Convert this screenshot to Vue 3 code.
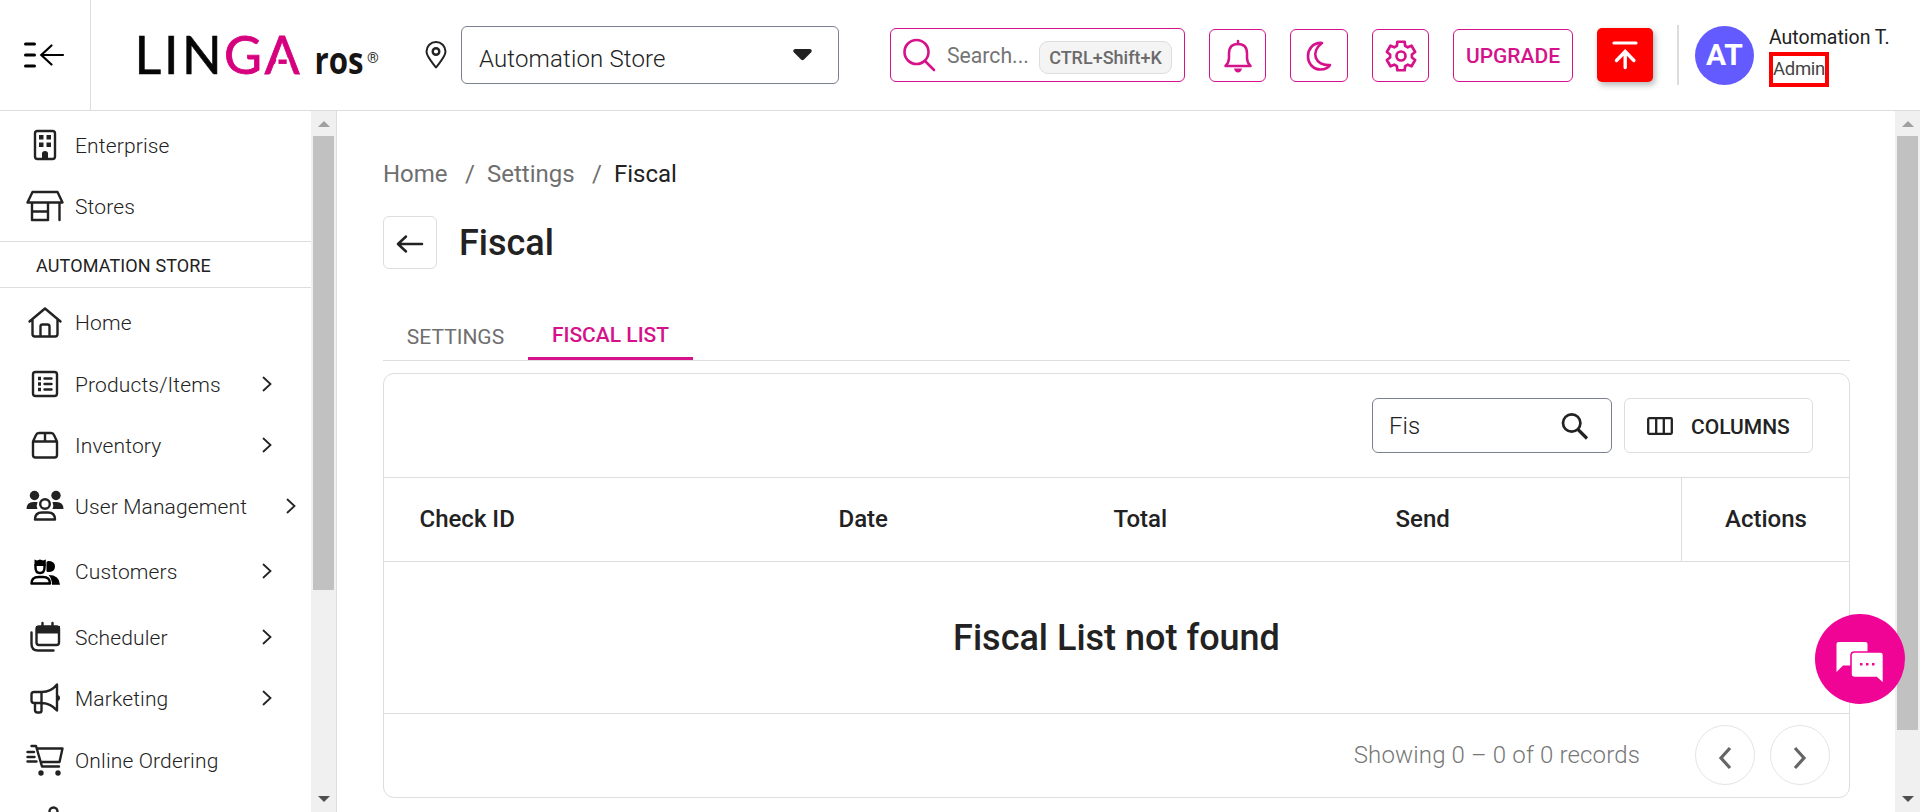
<script setup>
const topItems = [
  { label: 'Enterprise', icon: 'enterprise', h: 61 },
  { label: 'Stores', icon: 'stores', h: 61 },
]
const storeItems = [
  { label: 'Home', icon: 'home', h: 62 },
  { label: 'Products/Items', icon: 'products', h: 61, arrow: true },
  { label: 'Inventory', icon: 'inventory', h: 61, arrow: true },
  { label: 'User Management', icon: 'users', h: 61, arrow: true, wide: true },
  { label: 'Customers', icon: 'customers', h: 70, arrow: true },
  { label: 'Scheduler', icon: 'scheduler', h: 61, arrow: true },
  { label: 'Marketing', icon: 'marketing', h: 61, arrow: true },
  { label: 'Online Ordering', icon: 'ordering', h: 63 },
  { label: '', icon: 'more', h: 61 },
]
const icons = {
  enterprise: '<rect x="12" y="8" width="20" height="28" rx="2.5"/><path class="f" d="M16 12h4.500v4.500H16zM23.500 12H28v4.500h-4.500zM16 19.500h4.500V24H16zM23.500 19.500H28V24h-4.500zM19 36v-5.500q0-2.500 3-2.500t3 2.500V36z"/>',
  stores: '<path d="M9.500 8h25l5 10.500h-35zM9 18.500V36h16V18.500M9 27.500h16M36.500 18.500V36"/>',
  home: '<path d="M6.500 21.500 22 8.500l15.500 13M9.500 19.500V34q0 2.500 2.500 2.500h20q2.500 0 2.500-2.500V19.500M17.500 36V26.500q0-2 2-2h5q2 0 2 2V36"/>',
  products: '<rect x="10" y="10" width="24" height="24" rx="2.500"/><path d="M21.500 16.500h7M21.500 22h7M21.500 27.500h7"/><path class="f" d="M15 14.800h3v3.400h-3zM15 20.300h3v3.400h-3zM15 25.800h3v3.400h-3z"/>',
  inventory: '<path d="M10 18.500h24V32q0 2.500-2.500 2.500h-19Q10 34.500 10 32zM10 18.500l3-6.500q.8-2 3-2h12q2.200 0 3 2l3 6.500M22 10v8.500"/>',
  users: '<g class="f"><circle cx="11.500" cy="11.500" r="4.700"/><circle cx="33" cy="11.500" r="4.700"/><path d="M3.500 25q0-7 7-7h4q-1.500 3.500 0 7zM40.500 25q0-7-7-7h-4q1.500 3.500 0 7z"/></g><circle cx="22" cy="20" r="4.800"/><path d="M12 35.500q0-7 7-7h6q7 0 7 7z"/>',
  customers: '<g class="k"><path d="M8.500 34.500q0-6.500 7-6.500h4.500q7 0 7 6.500zM12.500 16v2.500q0 5.500 4.500 5.500t4.500-5.500V16"/><path class="f" d="M11.500 10.500 14 11.500l3-1 3 1 2.800-1V17H11.500zM25 12q7 0 7 5.500T25 23q-1.500 0-1.500-1V13zM25.500 26q11 0 11.500 9.700h-8q0-6-3.500-9.700z"/></g>',
  scheduler: '<rect x="13.500" y="11.500" width="22.500" height="18.500" rx="2.500"/><path d="M19.500 8v3M29.500 8v3M8.500 17.500V29q0 6.500 6.500 6.500h15.500"/><path class="f" d="M13 11h24v7.500H13z"/>',
  marketing: '<path d="M11 16h8q9 0 15-7.500v26Q28 27.500 19 27h-8q-2.500 0-2.500-2.500v-6Q8.500 16 11 16zM18.500 16v11M12 27.500V34q0 2.500 2.500 2.500h2q2 0 2-2V27.500"/><path class="f" d="M34 19q3 0 3 3t-3 3z"/>',
  ordering: '<path d="M8.500 8h4.500l6 20.500h17M14 10.500h25.500l-3 13.500H18M4.500 14h6.500M4.500 19h7M4.500 23.500h9"/><circle class="f" cx="18" cy="35" r="2.700"/><circle class="f" cx="35" cy="35" r="2.700"/>',
  more: '<circle cx="30.500" cy="11.500" r="4"/><path d="M22 21.500l6-7"/>',
}
const gearPath = (() => {
  let d = ''
  for (let i = 0; i < 12; i++) {
    const c = ((i * 30 - 90) * Math.PI) / 180
    const r = i % 2 ? 11 : 14.7
    const w = i % 2 ? 0.14 : 0.25
    const p = (a) => `${(16 + r * Math.cos(a)).toFixed(2)} ${(16 + r * Math.sin(a)).toFixed(2)}`
    d += `${i ? 'L' : 'M'}${p(c - w)}L${p(c + w)}`
  }
  return d + 'Z'
})()
const columns = ['Check ID', 'Date', 'Total', 'Send', 'Actions']
</script>

<template>
  <div class="page">
    <header class="header">
      <div class="toggle">
        <svg width="42" height="28" viewBox="0 0 42 28" fill="none" stroke="#000" stroke-linecap="round">
          <path d="M1.500 3h9M1.500 14h9M1.500 25h9" stroke-width="3" />
          <path d="M39 14H18M27.500 4.500 17.300 14 27.500 23.500" stroke-width="2.200" />
        </svg>
      </div>
      <svg class="logo" width="250" height="80" viewBox="0 0 250 80">
        <g font-family="Lato, sans-serif" font-size="52">
          <text x="4.500 34 52" y="58.500" fill="#060606" stroke="#060606" stroke-width=".6">LIN</text>
          <text x="94 134.500" y="58.500" fill="#d6007f" stroke="#d6007f" stroke-width=".8">GA</text>
        </g>
        <path d="M146.800 43.500h1.700v6h-3.800zM158.400 43.500h-1.700v6h3.800z" fill="#fff" />
        <text x="184.500" y="58.500" font-family="'Open Sans', sans-serif" font-weight="700" font-size="38" textLength="49" lengthAdjust="spacingAndGlyphs" fill="#171414">ros</text>
        <text x="237" y="47.500" font-family="Roboto, sans-serif" font-size="15" fill="#333">®</text>
      </svg>
      <svg class="pin" width="22" height="28" viewBox="0 0 22 28" fill="none" stroke="#222" stroke-width="2">
        <path d="M11 26.500C7 21 1.500 15.500 1.500 10.500a9.500 9.500 0 0 1 19 0C20.500 15.500 15 21 11 26.500z" stroke-linejoin="round" />
        <circle cx="11" cy="10.500" r="3.300" stroke-width="2.400" />
      </svg>
      <div class="select">
        <span>Automation Store</span>
        <svg width="19" height="12" viewBox="0 0 19 12"><path d="M2 0h15q3 1 1 3.500L11 10.500q-1.500 1.500-3 0L1 3.500Q-1 1 2 0z" fill="#222" /></svg>
      </div>
      <div class="search">
        <svg width="34" height="34" viewBox="0 0 34 34" fill="none" stroke="#d5128a" stroke-width="2.600" stroke-linecap="round"><circle cx="14.500" cy="14" r="12" /><path d="m23 23 9 9" /></svg>
        <span class="ph">Search...</span>
        <span class="kbd">CTRL+Shift+K</span>
      </div>
      <div class="sq bell">
        <svg width="32" height="34" viewBox="0 0 32 34" fill="none" stroke="#d5128a" stroke-width="2.500" stroke-linejoin="round"><path d="M3.500 27q3.500-3.500 3.500-8v-4.500Q7 5 16 5t9 9.500V19q0 4.500 3.500 8z" /><path d="M16 5V2" stroke-linecap="round" /><path d="M12 29.500h8q-1 4-4 4t-4-4z" fill="#d5128a" stroke="none" /></svg>
      </div>
      <div class="sq moon">
        <svg width="28" height="30" viewBox="0 0 28 30" fill="none" stroke="#d5128a" stroke-width="2.700" stroke-linejoin="round"><path d="M17 2C7 1.500 3 9 3 15c0 8 5.500 13.500 12.500 13.500 4 0 7.500-1.500 9.500-4.500C10 25 5 11 17 2z" /></svg>
      </div>
      <div class="sq gear">
        <svg width="32" height="32" viewBox="0 0 32 32" fill="none" stroke="#d5128a" stroke-width="2.700" stroke-linejoin="round"><path :d="gearPath" /><circle cx="16" cy="16" r="4.500" /></svg>
      </div>
      <div class="upgrade">UPGRADE</div>
      <div class="upload">
        <svg width="28" height="32" viewBox="0 0 28 32" fill="none" stroke="#fff" stroke-width="3.200" stroke-linecap="round"><path d="M3 4h22" /><path d="M14.200 28.500V12.500M5.500 21.500l8.700-9 8.700 9" stroke-width="3.400" /></svg>
      </div>
      <div class="vline"></div>
      <div class="avatar">AT</div>
      <div class="user">
        <span class="name">Automation T.</span>
        <span class="role">Admin</span>
      </div>
    </header>

    <div class="body">
      <aside class="sidebar">
        <nav class="nav">
          <div class="group top">
            <div v-for="it in topItems" :key="it.label" class="item" :style="{ height: it.h + 'px' }">
              <svg class="ico" width="44" height="44" viewBox="0 0 44 44" v-html="icons[it.icon]"></svg>
              <span>{{ it.label }}</span>
            </div>
          </div>
          <div class="store">AUTOMATION STORE</div>
          <div class="group">
            <div v-for="it in storeItems" :key="it.icon" class="item" :class="{ wide: it.wide }" :style="{ height: it.h + 'px' }">
              <svg class="ico" width="44" height="44" viewBox="0 0 44 44" v-html="icons[it.icon]"></svg>
              <span>{{ it.label }}</span>
              <svg v-if="it.arrow" class="chev" width="10" height="16" viewBox="0 0 10 16"><path d="m1.500 1.500 7 6.500-7 6.500" /></svg>
            </div>
          </div>
        </nav>
        <div class="bar">
          <i class="up"></i>
          <div class="thumb side"></div>
          <i class="down"></i>
        </div>
      </aside>

      <main class="main">
        <div class="crumbs">
          <span class="c1">Home</span><span class="sl">/</span><span class="c2">Settings</span><span class="sl">/</span><span class="cur">Fiscal</span>
        </div>
        <div class="titlebar">
          <div class="back">
            <svg width="28" height="20" viewBox="0 0 28 20" fill="none" stroke="#222" stroke-width="2.500" stroke-linecap="round" stroke-linejoin="round"><path d="M26 10H2M10 2.500 2 10l8 7.500" /></svg>
          </div>
          <h1>Fiscal</h1>
        </div>
        <div class="tabs">
          <div class="tab">SETTINGS</div>
          <div class="tab on">FISCAL LIST</div>
        </div>
        <section class="card">
          <div class="tools">
            <div class="filter">
              <span>Fis</span>
              <svg width="28" height="28" viewBox="0 0 28 28" fill="none" stroke="#222" stroke-width="2.700"><circle cx="10.700" cy="11" r="8.700" /><path d="m17 17.500 9 9" stroke-width="3.200" /></svg>
            </div>
            <div class="cols">
              <svg width="26" height="18" viewBox="0 0 26 18" fill="none" stroke="#222" stroke-width="2.300"><rect x="1.200" y="1.200" width="23.600" height="15.600" rx="1" /><path d="M9.200 1v16M16.800 1v16" /></svg>
              <span>COLUMNS</span>
            </div>
          </div>
          <div class="thead">
            <div v-for="c in columns" :key="c">{{ c }}</div>
          </div>
          <div class="empty">Fiscal List not found</div>
          <div class="foot">
            <span>Showing 0 – 0 of 0 records</span>
            <div class="pg"><svg width="14" height="24" viewBox="0 0 14 24"><path d="M12 2 3 12l9 10" /></svg></div>
            <div class="pg"><svg width="14" height="24" viewBox="0 0 14 24"><path d="m2 2 9 10-9 10" /></svg></div>
          </div>
        </section>
      </main>
      <div class="bar">
        <i class="up"></i>
        <div class="thumb page-thumb"></div>
        <i class="down"></i>
      </div>
    </div>

    <div class="chat">
      <svg width="48" height="44" viewBox="0 0 48 44">
        <path d="M2.500 1h27q2 0 2 2v19.500q0 2-2 2H7L.5 31V3q0-2 2-2z" fill="#fff" />
        <path d="M18.500 11h26q3 0 3 3v29l-7-6.500h-22q-3.500 0-3.500-3.500V14.500q0-3.500 3.500-3.500z" fill="#fff" stroke="#f00495" stroke-width="1.600" />
        <path d="M24 22h2.500v2.500H24zM30 22h2.500v2.500H30zM36 22h2.500v2.500H36z" fill="#f00495" />
      </svg>
    </div>
  </div>
</template>

<style>
html, body { margin: 0; overflow: hidden; background: #fff; }
</style>

<style scoped>
.page { width: 1920px; height: 812px; overflow: hidden; display: flex; flex-direction: column; position: relative; font-family: Roboto, "Liberation Sans", sans-serif; color: #222; background: #fff; }
.page * { box-sizing: border-box; }
svg { display: block; flex: none; }
.header { height: 111px; flex: none; display: flex; align-items: center; border-bottom: 1px solid #ddd; white-space: nowrap; }
.toggle { width: 91px; height: 110px; border-right: 1px solid #ddd; display: flex; align-items: center; padding: 0 0 1px 24px; flex: none; }
.logo { margin: 0 45px 1px 39px; }
.pin { margin-right: 14px; }
.select { width: 378px; height: 58px; border: 1px solid #7b8190; border-radius: 6px; display: flex; align-items: center; justify-content: space-between; padding: 0 26px 0 17px; font-size: 24px; font-weight: 300; flex: none; letter-spacing: .15px; }
.select span { padding-top: 8px; }
.search { width: 295px; height: 54px; border: 1px solid #d5128a; border-radius: 6px; margin-left: 51px; display: flex; align-items: center; padding-left: 11px; flex: none; }
.ph { font-size: 21.200px; color: #757575; margin-left: 11px; width: 92px; padding-top: 1px; }
.kbd { width: 133px; height: 33px; margin-top: 5px; border: 1px solid #ddd; border-radius: 9px; background: #f4f4f4; color: #6b6b6b; font-size: 18px; font-weight: 500; line-height: 32px; text-align: center; }
.sq { width: 57px; height: 53px; border: 1px solid #d5128a; border-radius: 6px; display: flex; align-items: center; justify-content: center; margin: 1px 0 0 24px; flex: none; }
.moon { width: 58px; }
.upgrade { width: 120px; height: 53px; border: 1px solid #d5128a; border-radius: 6px; margin: 1px 0 0 24px; color: #d5128a; font-size: 21px; font-weight: 500; line-height: 52px; text-align: center; flex: none; }
.upload { width: 56px; height: 54px; background: #f00; border-radius: 5px; margin-left: 24px; display: flex; align-items: center; justify-content: center; box-shadow: 2px 3px 6px rgba(0,0,0,.3); flex: none; }
.vline { width: 2px; height: 60px; background: #ddd; margin: 0 16px 0 24px; flex: none; }
.avatar { width: 59px; height: 59px; border-radius: 50%; background: #635bff; color: #fff; font-size: 30px; font-weight: 700; text-align: center; line-height: 58px; flex: none; }
.user { display: flex; flex-direction: column; align-items: flex-start; margin: 0 0 0 15px; padding-top: 3px; }
.name { font-size: 19.500px; line-height: 24px; margin-bottom: 2px; }
.role { border: 4px solid #f00; width: 60px; height: 35px; line-height: 26px; font-size: 18.500px; letter-spacing: -.3px; color: #444; text-align: center; }

.body { flex: 1; display: flex; min-height: 0; }
.sidebar { width: 337px; border-right: 1px solid #ddd; display: flex; flex: none; }
.nav { width: 311px; overflow: hidden; display: flex; flex-direction: column; }
.group { flex: none; }
.top { height: 130px; padding-top: 3px; }
.item { display: flex; align-items: center; padding-left: 23px; font-size: 21px; font-weight: 300; letter-spacing: .14px; }
.item span { margin-left: 8px; padding-top: 2px; width: 187px; white-space: nowrap; }
.wide span { width: 211px; }
.ico { fill: none; stroke: #222; stroke-width: 2.400; stroke-linecap: round; stroke-linejoin: round; }
.ico :deep(.f) { fill: #222; stroke: none; }
.ico :deep(.k) { stroke: #000; }
.ico :deep(.k .f) { fill: #000; }
.chev { fill: none; stroke: #222; stroke-width: 1.800; stroke-linecap: round; }
.store { height: 47px; flex: none; border-top: 1px solid #ddd; border-bottom: 1px solid #ddd; padding-left: 36px; line-height: 48px; font-size: 18px; margin-bottom: 3px; letter-spacing: .13px; }
.bar { width: 25px; flex: none; background: #f0f0f0; display: flex; flex-direction: column; align-items: center; padding: 10px 0; }
.up { width: 0; height: 0; border: 6px solid transparent; border-top: 0; border-bottom-color: #a0a0a0; margin-bottom: 9px; }
.down { width: 0; height: 0; border: 6px solid transparent; border-bottom: 0; border-top-color: #505050; margin-top: auto; }
.thumb { width: 21px; background: #c1c1c1; }
.side { height: 454px; }
.page-thumb { height: 594px; }

.main { flex: 1; padding: 46px 45px 0 46px; display: flex; flex-direction: column; min-width: 0; }
.crumbs { display: flex; height: 34px; line-height: 34px; font-size: 24px; color: #6f6f6f; }
.c1 { width: 82px; }
.c2 { width: 105px; }
.sl { width: 22px; }
.cur { color: #222; }
.titlebar { display: flex; align-items: center; margin-top: 25px; height: 53px; }
.back { width: 54px; height: 53px; border: 1px solid #ddd; border-radius: 6px; display: flex; align-items: center; justify-content: center; padding-top: 3px; }
h1 { margin: 0 0 0 22px; padding-top: 2px; font-size: 36px; font-weight: 500; line-height: 53px; }
.tabs { display: flex; margin-top: 42px; height: 50px; border-bottom: 1px solid #ddd; font-size: 21px; color: #6f6f6f; }
.tab { width: 145px; text-align: center; line-height: 52px; }
.on { width: 165px; font-weight: 500; color: #d5128a; line-height: 48px; border-bottom: 3px solid #d5128a; }
.card { margin-top: 12px; height: 425px; border: 1px solid #ddd; border-radius: 11px; }
.tools { height: 103px; display: flex; justify-content: flex-end; padding: 24px 36px 0 0; }
.filter { width: 240px; height: 55px; border: 1px solid #7b8190; border-radius: 6px; display: flex; align-items: center; justify-content: space-between; padding: 0 22px 0 16px; font-size: 24px; font-weight: 300; }
.cols { width: 189px; height: 55px; margin-left: 12px; border: 1px solid #ddd; border-radius: 6px; display: flex; align-items: center; padding-left: 22px; font-size: 21px; font-weight: 500; }
.cols span { margin-left: 18px; padding-top: 2px; }
.thead { height: 85px; border-top: 1px solid #ddd; border-bottom: 1px solid #ddd; display: grid; grid-template-columns: 419px 275px 282px 321px 168px; font-size: 24px; font-weight: 500; line-height: 82px; }
.thead div { padding-left: 35.500px; }
.thead div:last-child { border-left: 1px solid #ddd; padding-left: 43px; }
.empty { height: 151px; line-height: 153px; text-align: center; font-size: 36px; font-weight: 500; }
.foot { height: 84px; border-top: 1px solid #ddd; display: flex; justify-content: flex-end; align-items: center; padding: 0 19px 2px 0; font-size: 24px; color: #777; font-weight: 300; letter-spacing: .15px; }
.foot span { margin-right: 55px; }
.pg { width: 60px; height: 60px; border: 1px solid #e4e4e4; border-radius: 50%; display: flex; align-items: center; justify-content: center; padding-top: 7px; }
.pg + .pg { margin-left: 15px; }
.pg path { fill: none; stroke: #666; stroke-width: 3.200; }
.chat { position: absolute; left: 1815px; top: 614px; width: 90px; height: 90px; border-radius: 50%; background: #f00495; display: flex; align-items: center; justify-content: center; padding-top: 7px; }
</style>
